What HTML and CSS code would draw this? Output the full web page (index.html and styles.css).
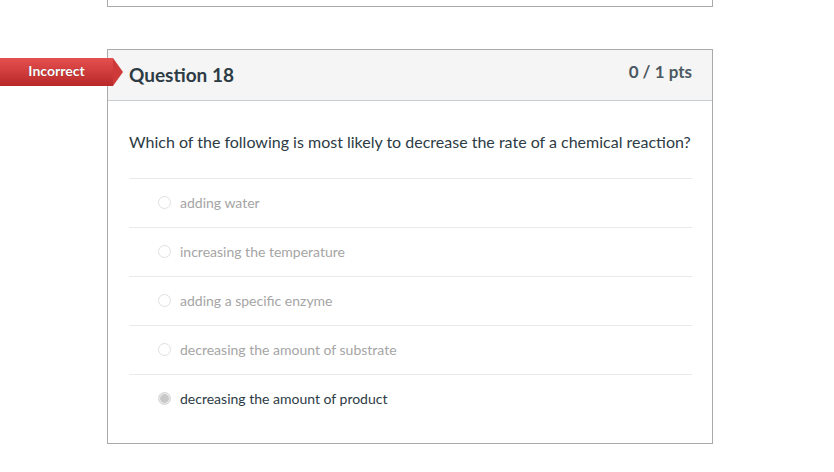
FILE: index.html
```html
<!DOCTYPE html>
<html>
<head>
<meta charset="utf-8">
<link rel="stylesheet" href="styles.css">
</head>
<body>
<div class="prev-card"></div>
<div class="question">
  <div class="badge">Incorrect</div>
  <div class="q-header">
    <span class="q-title">Question 18</span>
    <span class="q-pts">0 / 1 pts</span>
  </div>
  <div class="q-body">
    <p class="q-text">Which of the following is most likely to decrease the rate of a chemical reaction?</p>
    <ul class="answers">
      <li class="answer"><span class="radio"></span><span>adding water</span></li>
      <li class="answer"><span class="radio"></span><span>increasing the temperature</span></li>
      <li class="answer"><span class="radio"></span><span>adding a specific enzyme</span></li>
      <li class="answer"><span class="radio"></span><span>decreasing the amount of substrate</span></li>
      <li class="answer selected"><span class="radio"></span><span>decreasing the amount of product</span></li>
    </ul>
  </div>
</div>
</body>
</html>
```
FILE: styles.css
```css
html, body {
  margin: 0;
  padding: 0;
  background: #fff;
  font-family: Lato, "Open Sans", sans-serif;
  color: #2d3b45;
}
.prev-card {
  margin-left: 107px;
  width: 604px;
  height: 6px;
  border: 1px solid #aaa;
  border-top: none;
}
.question {
  margin-left: 107px;
  margin-top: 42px;
  width: 604px;
  border: 1px solid #aaa;
  height: 393px;
}
.badge {
  position: absolute;
  left: 0;
  top: 58px;
  width: 113px;
  height: 28px;
  box-sizing: border-box;
  background: linear-gradient(#e5504f, #b82828);
  color: #fff;
  font-weight: 700;
  font-size: 14px;
  line-height: 26px;
  text-align: center;
  text-shadow: 0 0 1px rgba(0,0,0,0.4);
}
.badge::after {
  content: "";
  position: absolute;
  right: -10px;
  top: 0;
  border-top: 14px solid transparent;
  border-bottom: 14px solid transparent;
  border-left: 10px solid #cd3a39;
}
.q-header {
  height: 50px;
  background: #f5f5f5;
  border-bottom: 1px solid #c7cdd1;
  display: flex;
  align-items: center;
  justify-content: space-between;
  padding: 0 20px 0 21px;
}
.q-title {
  font-size: 19px;
  font-weight: 700;
  margin-bottom: 1px;
}
.q-pts {
  font-size: 17px;
  font-weight: 700;
  color: #4d5962;
  margin-bottom: 8px;
}
.q-body {
  padding: 0 20px 0 21px;
}
.q-text {
  margin: 0;
  padding-top: 31px;
  height: 46px;
  font-size: 16px;
  line-height: 20px;
}
.answers {
  list-style: none;
  margin: 0;
  padding: 0;
}
.answer {
  height: 48px;
  box-sizing: content-box;
  border-top: 1px solid #e8eaec;
  display: flex;
  align-items: center;
  font-size: 14px;
  color: #a5a5a5;
  padding-left: 29px;
}
.answer > span:last-child {
  margin-bottom: 1px;
}
.radio {
  width: 11px;
  height: 11px;
  border: 1px solid #e0e0e0;
  border-radius: 50%;
  margin-right: 9px;
  margin-bottom: 1px;
  background: #fff;
}
.answer.selected {
  color: #2d3b45;
}
.answer.selected .radio {
  border-color: #d6d6d6;
  background: radial-gradient(circle, #c8c8c8 0 4px, #e6e6e6 4.5px);
}
```
